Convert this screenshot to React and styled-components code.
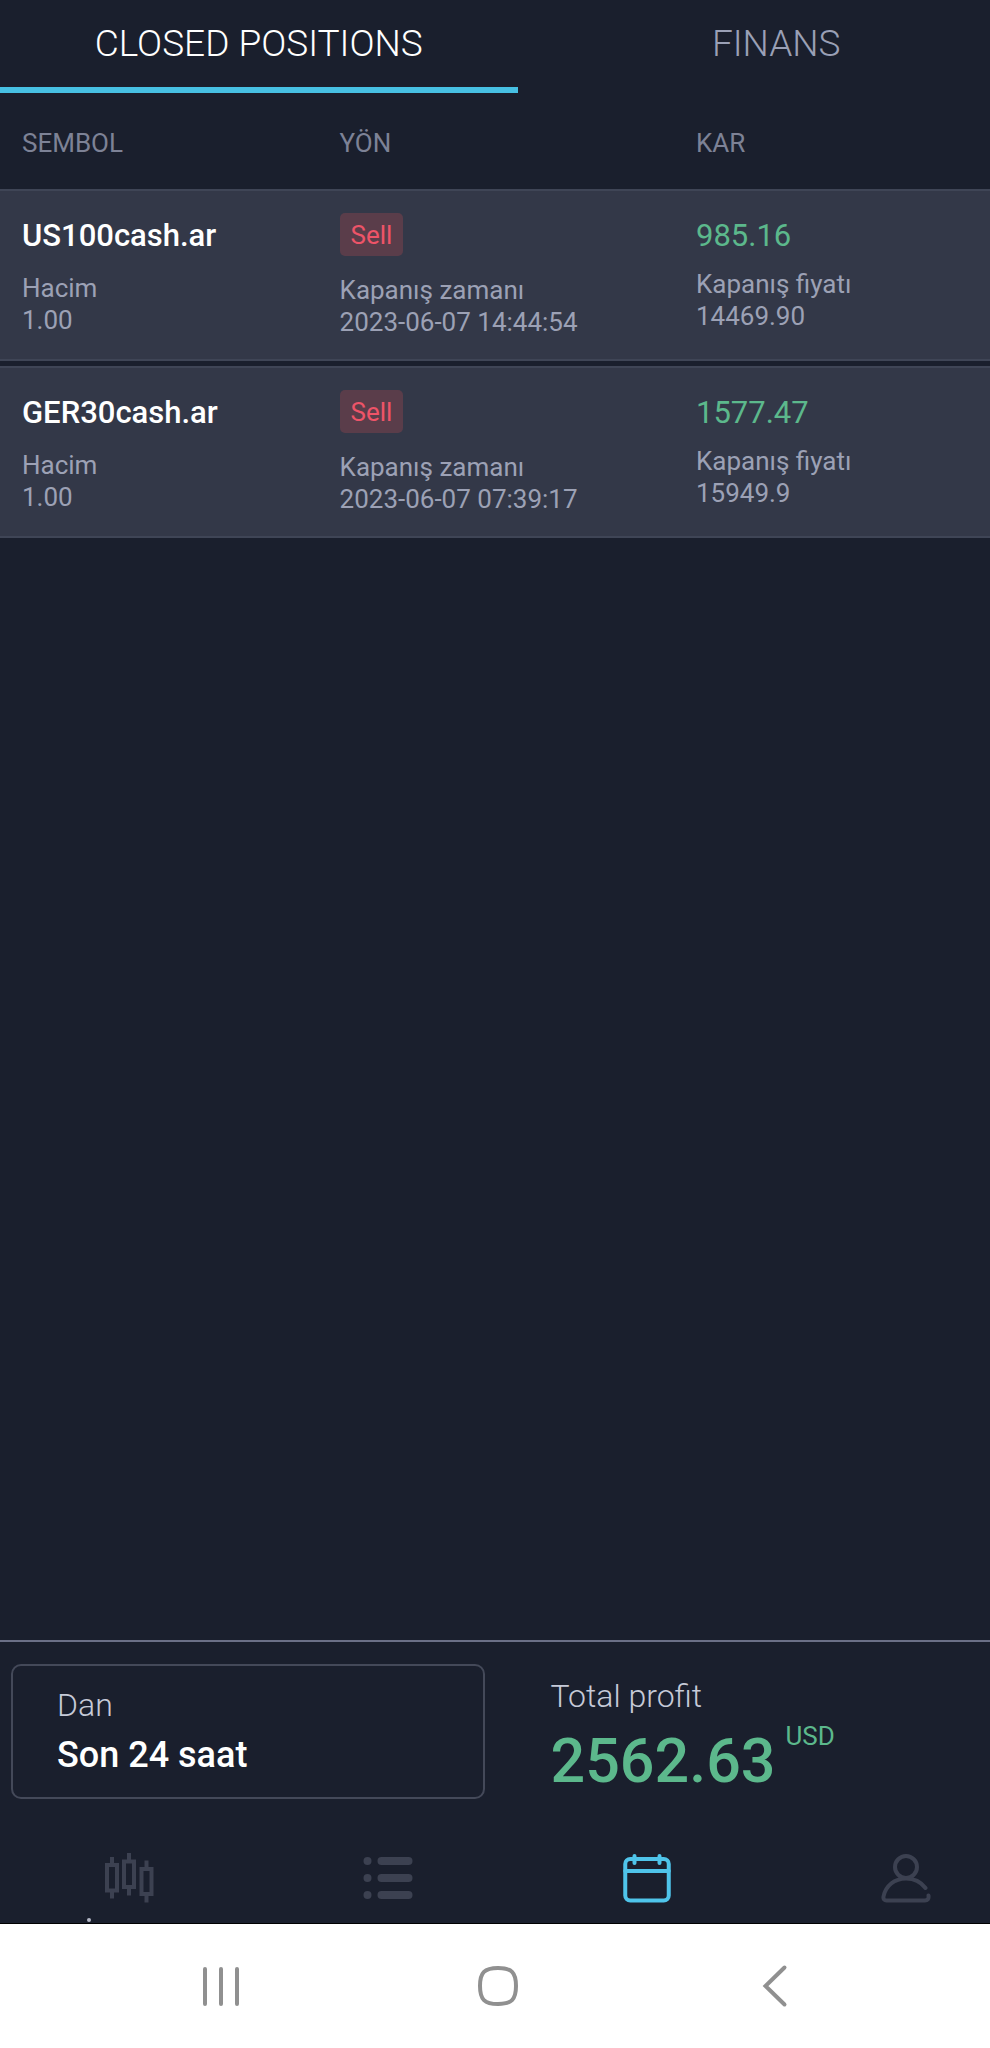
import React, { useState } from "react";
import styled, { createGlobalStyle } from "styled-components";

const positions = [
  { symbol: "US100cash.ar", volume: "1.00", side: "Sell", time: "2023-06-07 14:44:54", profit: "985.16", price: "14469.90" },
  { symbol: "GER30cash.ar", volume: "1.00", side: "Sell", time: "2023-06-07 07:39:17", profit: "1577.47", price: "15949.9" },
];

const tabs = ["CLOSED POSITIONS", "FINANS"];

function CandlesIcon() {
  return (
    <svg width="50" height="50" viewBox="0 0 50 50" fill="none" stroke="currentColor" strokeWidth="4">
      <path d="M3 12h10v25.500H3zM8 4v8M8 37.500v8" />
      <path d="M20 8.500h10v25.500h-10zM25 0v8.500M25 34v8.500" />
      <path d="M37.500 16h10v25h-10zM42.500 7.500v8.500M42.500 41v8.500" />
    </svg>
  );
}

function ListIcon() {
  return (
    <svg width="50" height="50" viewBox="0 0 50 50" fill="currentColor">
      {[4, 21, 38].map((y) => (
        <g key={y}>
          <circle cx="4.500" cy={y + 4} r="4" />
          <rect x="14.500" y={y} width="35" height="8" rx="4" />
        </g>
      ))}
    </svg>
  );
}

function CalendarIcon() {
  return (
    <svg width="50" height="50" viewBox="0 0 50 50" fill="none" stroke="currentColor" strokeWidth="4" strokeLinecap="round">
      <rect x="3.250" y="6" width="43.500" height="41.500" rx="5" />
      <path d="M3.250 18h43.500" />
      <path d="M12.500 3v7M37.500 3v7" />
    </svg>
  );
}

function UserIcon() {
  return (
    <svg width="50" height="50" viewBox="0 0 50 50" fill="none" stroke="currentColor" strokeWidth="4" strokeLinecap="round" strokeLinejoin="round">
      <circle cx="25" cy="14" r="11" />
      <path d="M44.500 35C40 29 33 25.500 25 25.500C13.500 25.500 4.500 33 2.500 43.500C2 46 3.500 47.500 5.500 47.500H44C46.500 47.500 48 46 47.500 42.500" />
    </svg>
  );
}

const menu = [
  { name: "Piyasa", Icon: CandlesIcon },
  { name: "Emirler", Icon: ListIcon },
  { name: "Geçmiş", Icon: CalendarIcon },
  { name: "Hesap", Icon: UserIcon },
];

function App() {
  const [tab, setTab] = useState(0);
  const [page, setPage] = useState(2);

  return (
    <Screen>
      <GlobalStyle />
      <Tabs>
        {tabs.map((name, i) => (
          <Tab key={name} $active={tab === i} onClick={() => setTab(i)}>
            {name}
          </Tab>
        ))}
      </Tabs>

      <Content>
        <Table>
          <thead>
            <tr>
              <HeadCell $width="34.300%">SEMBOL</HeadCell>
              <HeadCell $width="36%">YÖN</HeadCell>
              <HeadCell>KAR</HeadCell>
            </tr>
          </thead>
          <tbody>
            {positions.map((p) => (
              <tr key={p.symbol}>
                <Cell>
                  <Lead>{p.symbol}</Lead>
                  <Details $gap="11px">Hacim<br />{p.volume}</Details>
                </Cell>
                <Cell>
                  <Lead>
                    <Badge>{p.side}</Badge>
                  </Lead>
                  <Details $gap="13px">Kapanış zamanı<br />{p.time}</Details>
                </Cell>
                <Cell>
                  <Lead $profit>{p.profit}</Lead>
                  <Details $gap="7px">Kapanış fiyatı<br />{p.price}</Details>
                </Cell>
              </tr>
            ))}
          </tbody>
        </Table>
      </Content>

      <Summary>
        <Period>
          <Label>Dan</Label>
          <PeriodValue>Son 24 saat</PeriodValue>
        </Period>
        <Total>
          <Label>Total profit</Label>
          <Amount>
            <strong>2562.63</strong>
            <span>USD</span>
          </Amount>
        </Total>
      </Summary>

      <Menu>
        {menu.map(({ name, Icon }, i) => (
          <MenuItem key={name} aria-label={name} $active={page === i} $dot={i === 0} onClick={() => setPage(i)}>
            <Icon />
          </MenuItem>
        ))}
      </Menu>

      <SystemBar>
        <SystemButton aria-label="Recents">
          <svg width="44" height="44" viewBox="0 0 44 44">
            <path d="M6 5v35M22 5v35M38 5v35" />
          </svg>
        </SystemButton>
        <SystemButton aria-label="Home">
          <svg width="44" height="44" viewBox="0 0 44 44">
            <path d="M22 4C35.500 4 40 8.500 40 22S35.500 40 22 40S4 35.500 4 22S8.500 4 22 4Z" />
          </svg>
        </SystemButton>
        <SystemButton aria-label="Back">
          <svg width="44" height="44" viewBox="0 0 44 44">
            <path d="M31.500 3.500L12.500 22L31.500 40.500" />
          </svg>
        </SystemButton>
      </SystemBar>
    </Screen>
  );
}

const GlobalStyle = createGlobalStyle`
  * {
    box-sizing: border-box;
  }
  body {
    margin: 0;
    background: #1a1f2d;
    font-family: Roboto, "Liberation Sans", sans-serif;
  }
  button {
    margin: 0;
    padding: 0;
    border: none;
    background: none;
    font-family: inherit;
    cursor: pointer;
  }
  svg {
    display: block;
  }
`;

const Screen = styled.div`
  display: flex;
  flex-direction: column;
  min-height: 100vh;
  overflow-x: hidden;
  color: #ffffff;
`;

/* a little wider than the screen, the last tab runs over the edge */
const Strip = styled.nav`
  display: flex;
  width: calc(100% + 45px);
`;

const Tabs = styled(Strip)`
  height: 93px;
`;

const Tab = styled.button`
  flex: 1;
  border-bottom: 6px solid ${(p) => (p.$active ? "#47c0e3" : "transparent")};
  color: ${(p) => (p.$active ? "#ffffff" : "#9aa0b6")};
  font-size: 37px;
  font-weight: 300;
`;

const Content = styled.main`
  flex: 1;
`;

const Table = styled.table`
  width: 100%;
  table-layout: fixed;
  border-spacing: 0 5px;
`;

const HeadCell = styled.th`
  width: ${(p) => p.$width || "auto"};
  padding: 29px 0 25px;
  color: #7d8296;
  font-size: 26px;
  font-weight: 400;
  line-height: 32px;
  text-align: left;

  &:first-child {
    padding-left: 22px;
  }
`;

const Cell = styled.td`
  height: 172px;
  padding: 22px 0 0;
  border: solid #3f4556;
  border-width: 2px 0;
  background: #333848;
  vertical-align: top;

  &:first-child {
    padding-left: 22px;
  }
`;

const Lead = styled.div`
  height: 48px;
  color: ${(p) => (p.$profit ? "#5cb88c" : "#ffffff")};
  font-size: 31px;
  font-weight: ${(p) => (p.$profit ? 400 : 500)};
  line-height: 46px;
`;

const Badge = styled.span`
  display: inline-block;
  padding: 2px 11px 0;
  border-radius: 5px;
  background: #5a3d4a;
  color: #ee5468;
  font-size: 26px;
  font-weight: 400;
  line-height: 41px;
  vertical-align: top;
`;

const Details = styled.div`
  margin-top: ${(p) => p.$gap};
  color: #9ca1b5;
  font-size: 26px;
  line-height: 32px;
`;

const Summary = styled.section`
  display: flex;
  padding: 22px 0 31px 11px;
  border-top: 2px solid #6b7087;
`;

const Period = styled.button`
  display: flex;
  flex-direction: column;
  align-items: flex-start;
  justify-content: center;
  gap: 6px;
  width: calc(50% - 16px);
  height: 135px;
  padding-left: 44px;
  border: 2px solid #444959;
  border-radius: 10px;
  color: #ffffff;
`;

const Label = styled.span`
  color: #c6cad8;
  font-size: 32px;
  font-weight: 300;
  line-height: 40px;
`;

const PeriodValue = styled.span`
  font-size: 36px;
  font-weight: 500;
  line-height: 48px;
`;

const Total = styled.div`
  display: flex;
  flex-direction: column;
  gap: 4px;
  padding: 12px 0 0 66px;
`;

const Amount = styled.div`
  display: flex;
  gap: 10px;
  color: #5cb88c;
  font-size: 26px;
  line-height: 32px;

  strong {
    font-size: 61px;
    font-weight: 500;
    line-height: 82px;
  }
`;

const Menu = styled(Strip)`
  height: 90px;
`;

const MenuItem = styled.button`
  position: relative;
  display: flex;
  flex: 1;
  align-items: center;
  justify-content: center;
  color: ${(p) => (p.$active ? "#4fc4ea" : "#3c4151")};

  &::after {
    content: "";
    display: ${(p) => (p.$dot ? "block" : "none")};
    position: absolute;
    bottom: 1px;
    left: 87px;
    width: 4px;
    height: 4px;
    border-radius: 50%;
    background: #b4b8c6;
  }
`;

const SystemBar = styled.footer`
  display: flex;
  height: 125px;
  padding: 0 76px 0 82px;
  border-top: 1px solid #000000;
  background: #ffffff;
`;

const SystemButton = styled.button`
  display: flex;
  flex: 1;
  align-items: center;
  justify-content: center;

  svg {
    fill: none;
    stroke: #909090;
    stroke-width: 4;
    stroke-linecap: round;
  }
`;

export default App;
